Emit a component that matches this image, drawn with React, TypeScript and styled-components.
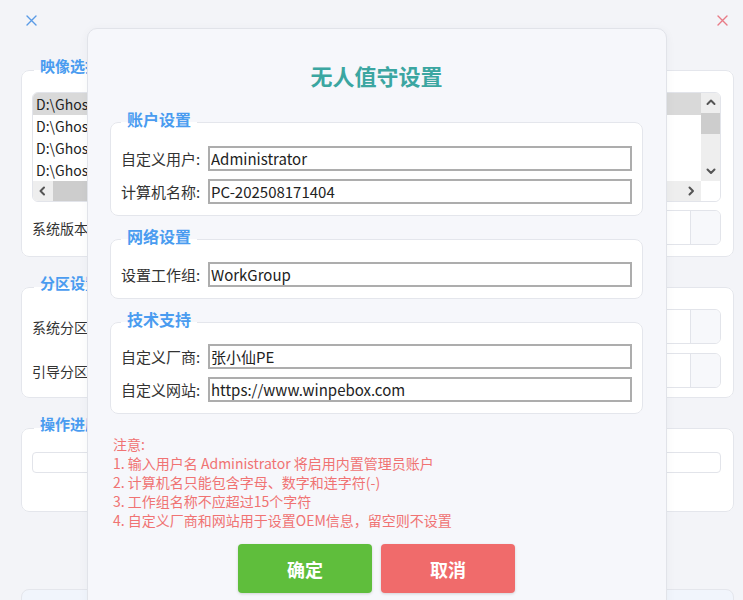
import styled, { createGlobalStyle } from "styled-components";

const GlobalStyle = createGlobalStyle`
  html, body {
    margin: 0;
    padding: 0;
  }
  body {
    background: #f3f4f8;
    font-family: "Noto Sans CJK SC", "Noto Sans", sans-serif;
    color: #222;
  }
  * {
    box-sizing: border-box;
  }
`;

const Window = styled.div`
  position: relative;
  height: 600px;
  overflow: hidden;
`;

const TitleBar = styled.div`
  height: 40px;
  display: flex;
  align-items: center;
  justify-content: space-between;
  padding: 0 15px 0 26px;
`;

const BgBody = styled.div`
  display: flex;
  flex-direction: column;
  padding: 0 9px 0 21px;
`;

const BgGroup = styled.fieldset<{ $pt: number; $pb: number }>`
  margin: 18px 0 0;
  min-width: 0;
  border: 1px solid #e4e6ec;
  border-radius: 8px;
  background: #fff;
  padding: ${(p) => p.$pt}px 12px ${(p) => p.$pb}px 10px;
`;

const BgLegend = styled.legend`
  margin-left: 2px;
  padding: 0 6px 8px;
  font-size: 15px;
  line-height: 16px;
  font-weight: 700;
  color: #4a9cf0;
`;

const ListBox = styled.div`
  height: 110px;
  border: 1px solid #e2e4ea;
  border-radius: 6px;
  overflow: hidden;
  display: grid;
  grid-template-columns: 1fr 19px;
  grid-template-rows: 1fr 20px;
  background: #fff;
`;

const ListItems = styled.div`
  overflow: hidden;
`;

const ListItem = styled.div<{ $selected?: boolean }>`
  height: 22px;
  line-height: 22px;
  padding-left: 3px;
  font-size: 14px;
  white-space: nowrap;
  background: ${(p) => (p.$selected ? "#d9d9d9" : "transparent")};
`;

const VScroll = styled.div`
  background: #eeeeee;
  display: grid;
  grid-template-rows: 20px 21px 1fr 20px;
`;

const HScroll = styled.div`
  background: #eeeeee;
  display: grid;
  grid-template-columns: 20px 160px 1fr 20px;
`;

const ScrollBtn = styled.div`
  display: flex;
  align-items: center;
  justify-content: center;
`;

const Thumb = styled.div`
  background: #cdcdcd;
`;

const Corner = styled.div`
  background: #fff;
`;

const BgRow = styled.div<{ $mt: number }>`
  display: flex;
  align-items: center;
  gap: 8px;
  margin-top: ${(p) => p.$mt}px;
  font-size: 14px;
  color: #333;
`;

const BgLabel = styled.span`
  flex-shrink: 0;
`;

const ComboBox = styled.div`
  flex: 1;
  height: 35px;
  border: 1px solid #e2e4ea;
  border-radius: 6px;
  overflow: hidden;
  display: grid;
  grid-template-columns: 1fr 30px;
  background: #fff;
`;

const ComboButton = styled.div`
  border-left: 1px solid #e2e4ea;
  background: #f7f8fb;
`;

const Progress = styled.div`
  height: 21px;
  border: 1px solid #e2e4ea;
  border-radius: 4px;
  background: #fff;
`;

const BgFooter = styled.div`
  margin-top: 77px;
  height: 60px;
  border: 1px solid #e4e6ec;
  border-radius: 8px;
  background: #f1f5fc;
`;

const Dialog = styled.div`
  position: absolute;
  left: 87px;
  top: 28px;
  width: 580px;
  height: 620px;
  border: 1px solid #e1e3e9;
  border-radius: 10px;
  background: #f6f7fb;
  box-shadow: 0 2px 10px rgba(40, 50, 80, 0.05);
  padding: 31px 23px 0 22px;
  display: flex;
  flex-direction: column;
`;

const Title = styled.h1`
  margin: 0;
  text-align: center;
  font-size: 22px;
  line-height: 30px;
  font-weight: 700;
  color: #3ba6a1;
`;

const Group = styled.fieldset<{ $mt: number; $pt: number }>`
  margin: ${(p) => p.$mt}px 0 0;
  min-width: 0;
  border: 1px solid #e4e6ec;
  border-radius: 8px;
  background: #fff;
  padding: ${(p) => p.$pt}px 10px 11px;
  display: flex;
  flex-direction: column;
  gap: 8px;
`;

const Legend = styled.legend`
  padding: 0 6px 6px;
  font-size: 16px;
  line-height: 18px;
  font-weight: 700;
  color: #4a9cf0;
`;

const FieldRow = styled.div`
  display: flex;
  align-items: center;
  gap: 4px;
`;

const FieldLabel = styled.span`
  width: 83px;
  flex-shrink: 0;
  font-size: 15px;
  color: #333;
  white-space: nowrap;
`;

const TextInput = styled.input`
  flex: 1;
  min-width: 0;
  height: 25px;
  border: 2px solid #adadad;
  padding: 0 1px;
  font-family: "Noto Sans CJK SC", "Noto Sans", sans-serif;
  font-size: 15px;
  color: #222;
  background: #fff;
  outline: none;
`;

const Notes = styled.div`
  margin-top: 21px;
  padding-left: 3px;
  font-size: 14px;
  line-height: 19px;
  color: #f07373;
`;

const Buttons = styled.div`
  margin-top: 14px;
  display: flex;
  justify-content: center;
  gap: 9px;
`;

const ActionButton = styled.button<{ $color: string }>`
  width: 134px;
  height: 49px;
  border: none;
  border-radius: 4px;
  background: ${(p) => p.$color};
  box-shadow: 0 1px 3px rgba(0, 0, 0, 0.15);
  color: #fff;
  font-family: "Noto Sans CJK SC", sans-serif;
  font-size: 18px;
  font-weight: 700;
  cursor: pointer;
`;

const CloseIcon = ({ color }: { color: string }) => (
  <svg width="11" height="11" viewBox="0 0 11 11">
    <path d="M1 1L10 10M10 1L1 10" stroke={color} strokeWidth="1.4" strokeLinecap="round" />
  </svg>
);

const Chevron = ({ dir }: { dir: "up" | "down" | "left" | "right" }) => {
  const d = {
    up: "M1.5 6L5 2.5L8.5 6",
    down: "M1.5 3.5L5 7L8.5 3.5",
    left: "M6 1.5L2.5 5L6 8.5",
    right: "M3.5 1.5L7 5L3.5 8.5",
  }[dir];
  return (
    <svg width="10" height="10" viewBox="0 0 10 10">
      <path d={d} fill="none" stroke="#555" strokeWidth="2" strokeLinecap="round" strokeLinejoin="round" />
    </svg>
  );
};

// the rest of each path sits under the dialog
const images = ["D:\\Ghost", "D:\\Ghost", "D:\\Ghost", "D:\\Ghost"];

const notes = [
  "注意:",
  "1. 输入用户名 Administrator 将启用内置管理员账户",
  "2. 计算机名只能包含字母、数字和连字符(-)",
  "3. 工作组名称不应超过15个字符",
  "4. 自定义厂商和网站用于设置OEM信息，留空则不设置",
];

export default function App() {
  return (
    <>
      <GlobalStyle />
      <Window>
        <TitleBar>
          <CloseIcon color="#5a9be6" />
          <CloseIcon color="#e87b87" />
        </TitleBar>
        <BgBody>
          <BgGroup $pt={10} $pb={11}>
            <BgLegend>映像选择</BgLegend>
            <ListBox>
              <ListItems>
                {images.map((img, i) => (
                  <ListItem key={i} $selected={i === 0}>
                    {img}
                  </ListItem>
                ))}
              </ListItems>
              <VScroll>
                <ScrollBtn>
                  <Chevron dir="up" />
                </ScrollBtn>
                <Thumb />
                <div />
                <ScrollBtn>
                  <Chevron dir="down" />
                </ScrollBtn>
              </VScroll>
              <HScroll>
                <ScrollBtn>
                  <Chevron dir="left" />
                </ScrollBtn>
                <Thumb />
                <div />
                <ScrollBtn>
                  <Chevron dir="right" />
                </ScrollBtn>
              </HScroll>
              <Corner />
            </ListBox>
            <BgRow $mt={8}>
              <BgLabel>系统版本:</BgLabel>
              <ComboBox>
                <div />
                <ComboButton />
              </ComboBox>
            </BgRow>
          </BgGroup>
          <BgGroup $pt={10} $pb={9}>
            <BgLegend>分区设置</BgLegend>
            <BgRow $mt={0}>
              <BgLabel>系统分区:</BgLabel>
              <ComboBox>
                <div />
                <ComboButton />
              </ComboBox>
            </BgRow>
            <BgRow $mt={9}>
              <BgLabel>引导分区:</BgLabel>
              <ComboBox>
                <div />
                <ComboButton />
              </ComboBox>
            </BgRow>
          </BgGroup>
          <BgGroup $pt={12} $pb={38}>
            <BgLegend>操作进度</BgLegend>
            <Progress />
          </BgGroup>
          <BgFooter />
        </BgBody>

        <Dialog>
          <Title>无人值守设置</Title>
          <Group $mt={20} $pt={12}>
            <Legend>账户设置</Legend>
            <FieldRow>
              <FieldLabel>自定义用户:</FieldLabel>
              <TextInput defaultValue="Administrator" />
            </FieldRow>
            <FieldRow>
              <FieldLabel>计算机名称:</FieldLabel>
              <TextInput defaultValue="PC-202508171404" />
            </FieldRow>
          </Group>
          <Group $mt={11} $pt={11}>
            <Legend>网络设置</Legend>
            <FieldRow>
              <FieldLabel>设置工作组:</FieldLabel>
              <TextInput defaultValue="WorkGroup" />
            </FieldRow>
          </Group>
          <Group $mt={11} $pt={10}>
            <Legend>技术支持</Legend>
            <FieldRow>
              <FieldLabel>自定义厂商:</FieldLabel>
              <TextInput defaultValue="张小仙PE" />
            </FieldRow>
            <FieldRow>
              <FieldLabel>自定义网站:</FieldLabel>
              <TextInput defaultValue="https://www.winpebox.com" />
            </FieldRow>
          </Group>
          <Notes>
            {notes.map((n) => (
              <div key={n}>{n}</div>
            ))}
          </Notes>
          <Buttons>
            <ActionButton $color="#5fbe3c">确定</ActionButton>
            <ActionButton $color="#f06b6b">取消</ActionButton>
          </Buttons>
        </Dialog>
      </Window>
    </>
  );
}
